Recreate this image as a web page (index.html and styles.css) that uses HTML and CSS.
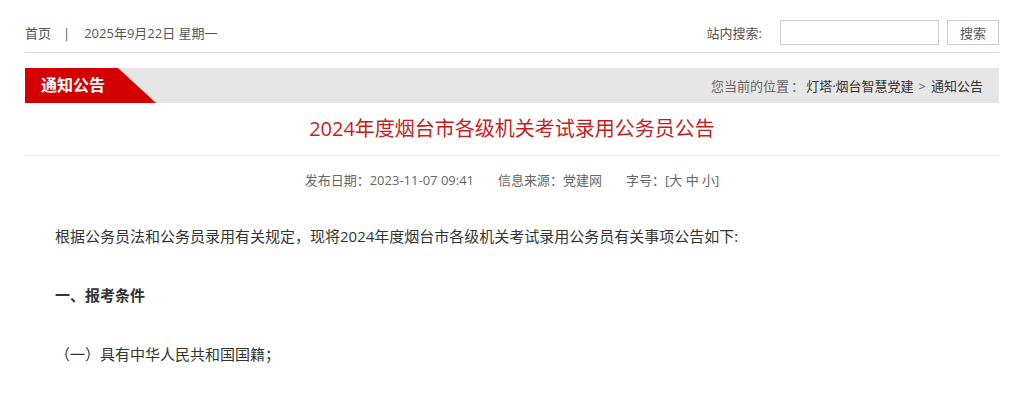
FILE: index.html
```html
<!DOCTYPE html>
<html lang="zh-CN">
<head>
<meta charset="utf-8">
<title>2024年度烟台市各级机关考试录用公务员公告</title>
<link rel="stylesheet" href="styles.css">
</head>
<body>
<div class="page">
  <div class="topbar">
    <div class="topleft">
      <a class="home" href="#">首页</a>
      <span class="sep">|</span>
      <span class="date">2025年9月22日 星期一</span>
    </div>
    <div class="search">
      <span class="search-label">站内搜索:</span>
      <input class="search-input" type="text">
      <button class="search-btn">搜索</button>
    </div>
  </div>
  <div class="banner">
    <div class="tab">通知公告</div>
    <div class="crumb">您当前的位置<span class="colon">：</span><a href="#">灯塔·烟台智慧党建</a><span class="gt">&gt;</span><a href="#">通知公告</a></div>
  </div>
  <h1 class="title">2024年度烟台市各级机关考试录用公务员公告</h1>
  <div class="meta">
    <span>发布日期：2023-11-07 09:41</span>
    <span>信息来源：党建网</span>
    <span>字号：[大 中 小]</span>
  </div>
  <div class="content">
    <p>根据公务员法和公务员录用有关规定，现将2024年度烟台市各级机关考试录用公务员有关事项公告如下:</p>
    <p class="bold">一、报考条件</p>
    <p>（一）具有中华人民共和国国籍；</p>
  </div>
</div>
</body>
</html>
```
FILE: styles.css
```css
html, body {
  margin: 0;
  padding: 0;
  background: #fff;
}
body {
  font-family: "Open Sans", "Noto Sans CJK SC", sans-serif;
  color: #333;
}
a {
  color: inherit;
  text-decoration: none;
}
.page {
  width: 974px;
  margin: 0 auto;
  padding-top: 20px;
}
.topbar {
  display: flex;
  justify-content: space-between;
  align-items: center;
  height: 32px;
  border-bottom: 1px solid #d9d9d9;
  font-size: 13px;
  color: #555;
}
.topleft {
  display: flex;
  align-items: center;
  padding-bottom: 7px;
}
.sep {
  margin: 0 14px 0 12px;
}
.search {
  display: flex;
  align-items: center;
  padding-bottom: 7px;
}
.search-label {
  margin-right: 18px;
}
.search-input {
  width: 157px;
  height: 23px;
  border: 1px solid #ccc;
  padding: 0;
  margin: 0 8px 0 0;
  box-sizing: content-box;
}
.search-btn {
  width: 52px;
  height: 25px;
  border: 1px solid #ccc;
  background: #fff;
  font-family: inherit;
  font-size: 13px;
  color: #555;
  padding: 0;
}
.banner {
  margin-top: 15px;
  height: 35px;
  background: #e6e6e6;
  display: flex;
  justify-content: space-between;
  align-items: center;
}
.tab {
  height: 35px;
  width: 131px;
  box-sizing: border-box;
  padding-left: 16px;
  line-height: 35px;
  background: #d40000;
  clip-path: polygon(0 0, 93px 0, 131px 100%, 0 100%);
  color: #fff;
  font-weight: bold;
  font-size: 16px;
}
.crumb {
  font-size: 13px;
  color: #666;
  padding-right: 16px;
}
.colon {
  margin: 0 2px;
}
.crumb a {
  color: #333;
}
.gt {
  margin: 0 5px;
  color: #666;
}
.title {
  margin: 0;
  height: 52px;
  line-height: 52px;
  text-align: center;
  font-size: 20px;
  font-weight: normal;
  color: #c41e1e;
  border-bottom: 1px solid #ececec;
}
.meta {
  display: flex;
  justify-content: center;
  gap: 24px;
  font-size: 13px;
  color: #666;
  margin-top: 14px;
}
.content {
  padding: 32px 30px 0;
  font-size: 15px;
  color: #333;
}
.content p {
  margin: 0 0 29px;
  line-height: 30px;
}
.content p.bold {
  font-weight: bold;
}
```
